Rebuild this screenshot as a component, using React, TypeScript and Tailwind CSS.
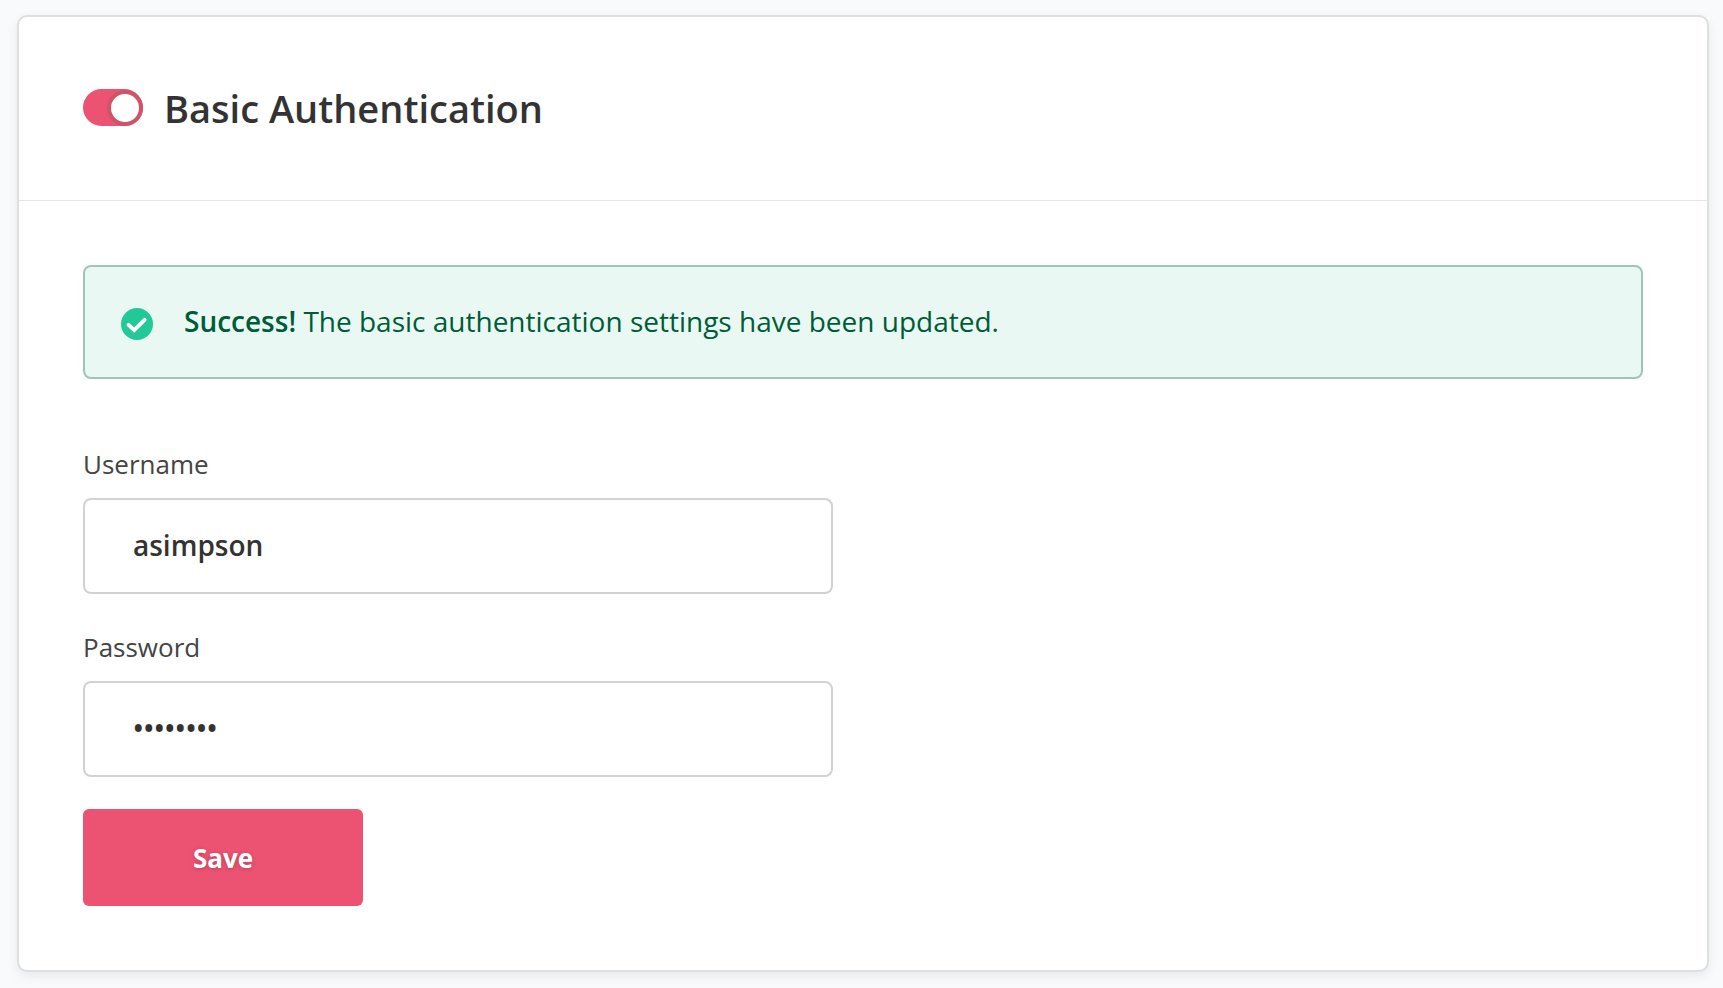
import React, { useState } from "react";

const Field = ({ id, label, type, value, onChange }: any) => (
  <div className="max-w-[750px] mb-8">
    <label
      htmlFor={id}
      className="block mb-3 text-[26px] leading-[43px] text-[#444444]"
    >
      {label}
    </label>
    <input
      id={id}
      type={type}
      value={value}
      onChange={(e) => onChange(e.target.value)}
      className="block w-full h-24 px-12 pb-0.5 bg-white border-2 border-[#d2d2d2] rounded-lg text-[28px] font-semibold text-[#333333] outline-none"
    />
  </div>
);

const App = () => {
  const [enabled, setEnabled] = useState<boolean>(true);
  const [username, setUsername] = useState<string>("asimpson");
  const [password, setPassword] = useState<string>("password");

  return (
    <div className="min-h-screen bg-[#f9fafc] pt-[15px] pb-4 pl-[17px] pr-[14px] font-['Open_Sans',sans-serif]">
      <section className="bg-white border-2 border-[#dfdfdf] rounded-[10px] shadow-[0_4px_12px_rgba(0,0,0,0.07)]">
        <header className="flex items-center px-16 pb-0.5 h-[184px] border-b border-[#e5e5e5]">
          <label className="flex items-center gap-[21px]">
            <input
              type="checkbox"
              checked={enabled}
              onChange={(e) => setEnabled(e.target.checked)}
              className="sr-only"
            />
            <span
              className={
                enabled
                  ? "flex items-center justify-end w-[60px] h-[37px] rounded-full bg-[#ec5271]"
                  : "flex items-center justify-start w-[60px] h-[37px] rounded-full bg-[#cccccc]"
              }
            >
              <span className="size-9 rounded-full bg-white border-4 border-[#cf5369]" />
            </span>
            <h1 className="text-[38px] leading-[52px] font-semibold text-[#333333]">
              Basic Authentication
            </h1>
          </label>
        </header>

        <div className="px-16 py-16">
          <div
            role="status"
            className="flex items-end gap-[31px] px-9 pt-9 pb-[37px] mb-16 bg-[#e9f8f3] border-2 border-[#9fc5b7] rounded-lg text-[28px] leading-[37px] text-[#005c38]"
          >
            <svg className="size-8 shrink-0" viewBox="0 0 32 32" fill="none">
              <circle cx="16" cy="16" r="16" fill="#20c997" />
              <path
                d="M7.5 16.8L13.2 22.2L23.6 11.8"
                stroke="#ffffff"
                strokeWidth="3.8"
                strokeLinecap="round"
              />
            </svg>
            <p>
              <strong className="font-semibold">Success!</strong> The basic
              authentication settings have been updated.
            </p>
          </div>

          <form onSubmit={(e) => e.preventDefault()}>
            <Field
              id="username"
              label="Username"
              type="text"
              value={username}
              onChange={setUsername}
            />
            <Field
              id="password"
              label="Password"
              type="password"
              value={password}
              onChange={setPassword}
            />
            <button
              type="submit"
              className="block w-[280px] h-[97px] pt-0.5 bg-[#ec5271] rounded-md text-[26px] font-bold text-white text-shadow-[0_1px_4px_rgba(0,0,0,0.2)]"
            >
              Save
            </button>
          </form>
        </div>
      </section>
    </div>
  );
};

export default App;
